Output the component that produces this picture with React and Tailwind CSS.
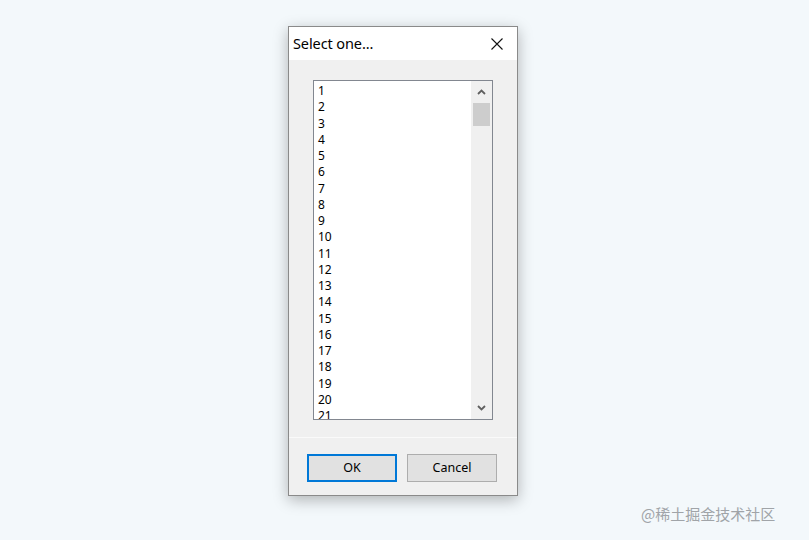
import React from "react";

const ITEMS = Array.from({ length: 21 }, (_, i) => i + 1);

function Chevron({ up }) {
  return (
    <svg width="9" height="6" viewBox="0 0 9 6" className="block">
      <path d={up ? "M1 5 L4.5 1.5 L8 5" : "M1 1 L4.5 4.5 L8 1"} fill="none" stroke="#606060" strokeWidth="1.8" />
    </svg>
  );
}

export default function App() {
  return (
    <div className="relative w-[809px] h-[540px] bg-[#f3f8fb] pt-[26px] pl-[288px] overflow-hidden"
      style={{ fontFamily: '"Noto Sans", "Open Sans", sans-serif' }}>
      <div className="w-[230px] h-[470px] border border-[#8a8a8a] bg-[#f0f0f0] shadow-[0_4px_14px_rgba(0,0,0,0.28)] flex flex-col">
        {/* title bar */}
        <div className="h-[33px] bg-white flex items-center justify-between pl-[4px] pr-[14px] shrink-0">
          <span className="text-[14.5px] text-black tracking-[-0.1px] leading-none">Select one...</span>
          <svg width="12" height="12" viewBox="0 0 12 12">
            <path d="M0.5 0.5 L11.5 11.5 M11.5 0.5 L0.5 11.5" stroke="#111" strokeWidth="1.1" />
          </svg>
        </div>

        {/* body */}
        <div className="h-[377px] pt-[20px] pl-[24px] shrink-0">
          <div className="w-[180px] h-[340px] border border-[#828790] bg-white flex">
            <div className="flex-1 overflow-hidden pl-[4px] pt-[2px]">
              {ITEMS.map((n) => (
                <div key={n} className="text-[12px] leading-[16.25px] text-black">{n}</div>
              ))}
            </div>
            <div className="w-[21px] bg-[#f0f0f0] flex flex-col items-center">
              <div className="h-[22px] flex items-center justify-center"><Chevron up /></div>
              <div className="w-[17px] h-[23px] bg-[#cdcdcd]" />
              <div className="flex-1" />
              <div className="h-[22px] flex items-center justify-center"><Chevron /></div>
            </div>
          </div>
        </div>

        {/* footer */}
        <div className="flex-1 border-t border-[#fafafa] flex gap-[10px] pl-[18px] pt-[16px]">
          <button className="w-[90px] h-[28px] bg-[#e1e1e1] border-2 border-[#0078d7] text-[12.5px] text-black flex items-center justify-center">OK</button>
          <button className="w-[90px] h-[28px] bg-[#e1e1e1] border border-[#adadad] text-[12.5px] text-black flex items-center justify-center">Cancel</button>
        </div>
      </div>

      <div className="absolute left-[641px] top-[503px] text-[15px] text-[#a0a4a8] leading-[22px]"
        style={{ fontFamily: '"Noto Sans CJK SC", sans-serif' }}>
        @稀土掘金技术社区
      </div>
    </div>
  );
}
